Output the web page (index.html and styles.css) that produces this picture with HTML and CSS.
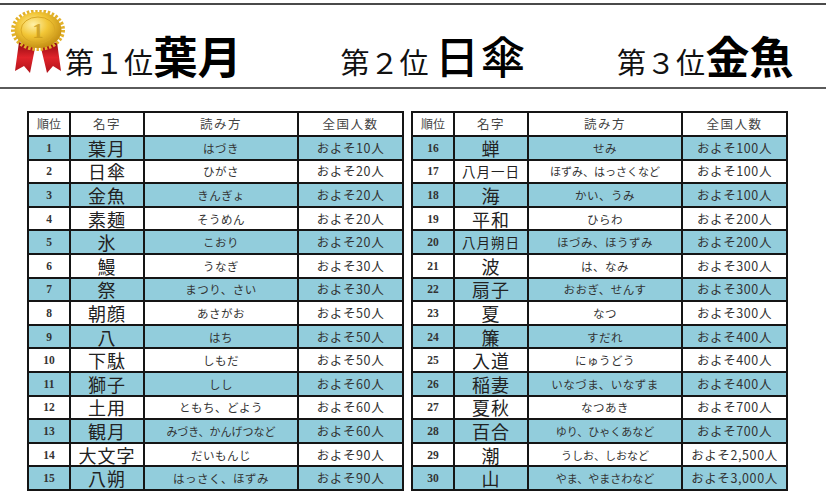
FILE: index.html
```html
<!DOCTYPE html>
<html lang="ja">
<head>
<meta charset="utf-8">
<link rel="stylesheet" href="styles.css">
</head>
<body>
<div class="page">
  <header class="ranking">
    <svg class="medal" width="54" height="64" viewBox="0 0 54 64" aria-hidden="true">
      <defs>
        <radialGradient id="gold" cx="40%" cy="35%" r="70%">
          <stop offset="0" stop-color="#fff1a8"/>
          <stop offset="0.45" stop-color="#f2c636"/>
          <stop offset="1" stop-color="#c08a10"/>
        </radialGradient>
        <linearGradient id="red" x1="0" y1="0" x2="0" y2="1">
          <stop offset="0" stop-color="#8e0a10"/>
          <stop offset="0.5" stop-color="#e0232a"/>
          <stop offset="1" stop-color="#b0121a"/>
        </linearGradient>
      </defs>
      <polygon points="8,32 24,38 19,63 13,56 4,61" fill="url(#red)"/>
      <polygon points="30,38 46,32 50,61 42,56 36,63" fill="url(#red)"/>
      <ellipse cx="27" cy="20" rx="24.5" ry="18.5" fill="none" stroke="#e2b12a" stroke-width="5" stroke-dasharray="2.4 1.7"/>
      <ellipse cx="27" cy="20" rx="23.5" ry="18" fill="url(#gold)"/>
      <ellipse cx="27" cy="20" rx="17" ry="13" fill="none" stroke="#d9a824" stroke-width="1"/>
      <text x="27" y="28" text-anchor="middle" class="medal-num">1</text>
    </svg>
    <div class="place p1"><span class="rank">第１位</span><span class="name bold">葉月</span></div>
    <div class="place p2"><span class="rank">第２位</span><span class="name thin">日傘</span></div>
    <div class="place p3"><span class="rank">第３位</span><span class="name bold">金魚</span></div>
  </header>

  <main class="tables">
    <table class="list">
      <colgroup><col class="c-no"><col class="c-name"><col class="c-read"><col class="c-pop"></colgroup>
      <thead>
        <tr><th class="h-no">順位</th><th>名字</th><th>読み方</th><th>全国人数</th></tr>
      </thead>
      <tbody>
        <tr><td class="no">1</td><td class="nm">葉月</td><td class="rd">はづき</td><td class="pp">およそ10人</td></tr>
        <tr><td class="no">2</td><td class="nm">日傘</td><td class="rd">ひがさ</td><td class="pp">およそ20人</td></tr>
        <tr><td class="no">3</td><td class="nm">金魚</td><td class="rd">きんぎょ</td><td class="pp">およそ20人</td></tr>
        <tr><td class="no">4</td><td class="nm">素麺</td><td class="rd">そうめん</td><td class="pp">およそ20人</td></tr>
        <tr><td class="no">5</td><td class="nm">氷</td><td class="rd">こおり</td><td class="pp">およそ20人</td></tr>
        <tr><td class="no">6</td><td class="nm">鰻</td><td class="rd">うなぎ</td><td class="pp">およそ30人</td></tr>
        <tr><td class="no">7</td><td class="nm">祭</td><td class="rd">まつり、さい</td><td class="pp">およそ30人</td></tr>
        <tr><td class="no">8</td><td class="nm">朝顔</td><td class="rd">あさがお</td><td class="pp">およそ50人</td></tr>
        <tr><td class="no">9</td><td class="nm">八</td><td class="rd">はち</td><td class="pp">およそ50人</td></tr>
        <tr><td class="no">10</td><td class="nm">下駄</td><td class="rd">しもだ</td><td class="pp">およそ50人</td></tr>
        <tr><td class="no">11</td><td class="nm">獅子</td><td class="rd">しし</td><td class="pp">およそ60人</td></tr>
        <tr><td class="no">12</td><td class="nm">土用</td><td class="rd">ともち、どよう</td><td class="pp">およそ60人</td></tr>
        <tr><td class="no">13</td><td class="nm">観月</td><td class="rd sm">みづき、かんげつなど</td><td class="pp">およそ60人</td></tr>
        <tr><td class="no">14</td><td class="nm">大文字</td><td class="rd">だいもんじ</td><td class="pp">およそ90人</td></tr>
        <tr><td class="no">15</td><td class="nm">八朔</td><td class="rd">はっさく、ほずみ</td><td class="pp">およそ90人</td></tr>
      </tbody>
    </table>

    <table class="list">
      <colgroup><col class="c-no"><col class="c-name"><col class="c-read"><col class="c-pop"></colgroup>
      <thead>
        <tr><th class="h-no">順位</th><th>名字</th><th>読み方</th><th>全国人数</th></tr>
      </thead>
      <tbody>
        <tr><td class="no">16</td><td class="nm">蝉</td><td class="rd">せみ</td><td class="pp">およそ100人</td></tr>
        <tr><td class="no">17</td><td class="nm long">八月一日</td><td class="rd sm">ほずみ、はっさくなど</td><td class="pp">およそ100人</td></tr>
        <tr><td class="no">18</td><td class="nm">海</td><td class="rd">かい、うみ</td><td class="pp">およそ100人</td></tr>
        <tr><td class="no">19</td><td class="nm">平和</td><td class="rd">ひらわ</td><td class="pp">およそ200人</td></tr>
        <tr><td class="no">20</td><td class="nm long">八月朔日</td><td class="rd">ほづみ、ほうずみ</td><td class="pp">およそ200人</td></tr>
        <tr><td class="no">21</td><td class="nm">波</td><td class="rd">は、なみ</td><td class="pp">およそ300人</td></tr>
        <tr><td class="no">22</td><td class="nm">扇子</td><td class="rd">おおぎ、せんす</td><td class="pp">およそ300人</td></tr>
        <tr><td class="no">23</td><td class="nm">夏</td><td class="rd">なつ</td><td class="pp">およそ300人</td></tr>
        <tr><td class="no">24</td><td class="nm">簾</td><td class="rd">すだれ</td><td class="pp">およそ400人</td></tr>
        <tr><td class="no">25</td><td class="nm">入道</td><td class="rd">にゅうどう</td><td class="pp">およそ400人</td></tr>
        <tr><td class="no">26</td><td class="nm">稲妻</td><td class="rd">いなづま、いなずま</td><td class="pp">およそ400人</td></tr>
        <tr><td class="no">27</td><td class="nm">夏秋</td><td class="rd">なつあき</td><td class="pp">およそ700人</td></tr>
        <tr><td class="no">28</td><td class="nm">百合</td><td class="rd sm">ゆり、ひゃくあなど</td><td class="pp">およそ700人</td></tr>
        <tr><td class="no">29</td><td class="nm">潮</td><td class="rd sm">うしお、しおなど</td><td class="pp">およそ2,500人</td></tr>
        <tr><td class="no">30</td><td class="nm">山</td><td class="rd sm">やま、やまさわなど</td><td class="pp">およそ3,000人</td></tr>
      </tbody>
    </table>
  </main>
</div>
</body>
</html>
```

FILE: styles.css
```css
html, body {
  margin: 0;
  padding: 0;
  background: #ffffff;
}

body {
  font-family: "Noto Sans CJK JP", "Liberation Sans", sans-serif;
  color: #111;
}

.page {
  width: 826px;
  height: 504px;
  overflow: hidden;
}

.ranking {
  margin-top: 3px;
  height: 86px;
  box-sizing: border-box;
  border-top: 2px solid #4a4a4a;
  border-bottom: 2px solid #5a5a5a;
  display: flex;
  align-items: flex-end;
  padding-bottom: 10px;
}

.medal {
  align-self: flex-start;
  margin-top: 5px;
  margin-left: 11px;
  flex: none;
}

.medal-num {
  font-family: "Liberation Serif", serif;
  font-weight: bold;
  font-size: 22px;
  fill: #c99a1c;
  opacity: 0.8;
}

.place {
  display: flex;
  align-items: flex-end;
  line-height: 1;
  white-space: nowrap;
}

.p1 { margin-left: 0; }
.p2 { margin-left: 99px; }
.p3 { margin-left: 90px; }

.rank {
  font-size: 29px;
  letter-spacing: 0.5px;
  color: #111;
  margin-bottom: 1px;
}

.name {
  font-size: 44px;
  color: #000;
}

.name.bold { font-weight: 700; }
.name.thin { font-weight: 500; margin-left: 6px; letter-spacing: 2px; }

.tables {
  display: flex;
  gap: 7px;
  padding-left: 27px;
  margin-top: 22px;
}

.list {
  border-collapse: collapse;
  border: 2px solid #111;
  table-layout: fixed;
  width: 375px;
}

.c-no { width: 42px; }
.c-name { width: 74px; }
.c-read { width: 154px; }
.c-pop { width: 105px; }

.list th,
.list td {
  border: 2px solid #151515;
  padding: 0;
  text-align: center;
  vertical-align: middle;
  white-space: nowrap;
  color: #333;
}

.list th {
  height: 22px;
  font-weight: 400;
  font-size: 12.5px;
  line-height: 14px;
  letter-spacing: 1.5px;
  color: #444;
  background: #fff;
}

.list th.h-no {
  letter-spacing: 0;
  font-size: 12px;
}

.list td {
  height: 21.6px;
  line-height: 14px;
}

.list tbody tr:nth-child(odd) td {
  background: #92cddc;
}

.no {
  font-family: "Liberation Serif", serif;
  font-weight: bold;
  font-size: 11.5px;
  color: #3a3a3a;
}

.list td.nm {
  font-size: 18px;
  line-height: 18px;
  color: #222;
  letter-spacing: 1px;
}

.list td.nm.long {
  font-size: 13.5px;
  line-height: 14px;
  letter-spacing: 1px;
}

.rd {
  font-size: 11.5px;
  color: #444;
  letter-spacing: 0.5px;
}

.rd.sm {
  font-size: 11px;
  letter-spacing: 0;
}

.pp {
  font-size: 12.5px;
  letter-spacing: 0.6px;
  color: #333;
}
```
